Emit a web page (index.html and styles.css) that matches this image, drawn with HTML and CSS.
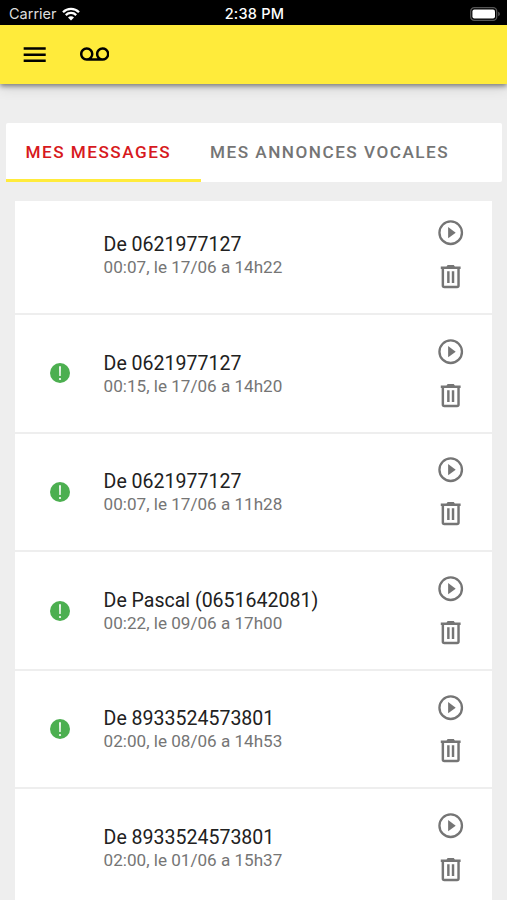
FILE: index.html
```
<!DOCTYPE html>
<html lang="fr">
<head>
  <meta charset="UTF-8" />
  <meta name="viewport" content="width=device-width, initial-scale=1.0"/>
  <title>Messagerie vocale</title>
  <link rel="stylesheet" href="styles.css">
</head>
<body>
  <!-- Icons -->
  <svg class="sprite">
    <symbol id="play" viewBox="0 0 24 24">
      <circle cx="12" cy="12" r="9.2" fill="none" stroke="currentColor" stroke-width="1.9"/>
      <path d="M9.9 7.4v9.2l6.2-4.6z" fill="currentColor"/>
    </symbol>
    <symbol id="trash" viewBox="0 0 24 24">
      <path d="M5.6 5v14.2a1.2 1.2 0 0 0 1.2 1.2h10.4a1.2 1.2 0 0 0 1.2-1.2V5M10.1 7.6v9.6M13.9 7.6v9.6" fill="none" stroke="currentColor" stroke-width="2"/>
      <path d="M3.9 3.7h4.7l.9-1.2h5l.9 1.2h4.7v2H3.9z" fill="currentColor"/>
    </symbol>
    <symbol id="alert" viewBox="0 0 20 20">
      <circle cx="10" cy="10" r="10" fill="#4caf50"/>
      <path d="M9.1 3.2h1.8l-.2 9.8H9.3z" fill="#fff"/>
      <circle cx="10" cy="16" r="1.1" fill="#fff"/>
    </symbol>
  </svg>

  <div class="status-bar">
    <div class="carrier">
      <span>Carrier</span>
      <svg class="wifi" viewBox="0 0 18 14">
        <path d="M1 5.2a11.3 11.3 0 0 1 16 0M3.8 8.1a7.4 7.4 0 0 1 10.4 0" fill="none" stroke="#fff" stroke-width="2.3"/>
        <path d="M9 13.6l-3-3.1a4.2 4.2 0 0 1 6 0z" fill="#fff"/>
      </svg>
    </div>
    <div class="time">2:38 PM</div>
    <div class="battery">
      <svg viewBox="0 0 30 14">
        <rect x=".7" y=".7" width="26" height="12.6" rx="3.6" fill="none" stroke="#555" stroke-width="1.3"/>
        <rect x="2.4" y="2.4" width="22.6" height="9.2" rx="2" fill="#fff"/>
        <path d="M28.3 4.8c1.9.7 1.9 3.7 0 4.4z" fill="#666"/>
      </svg>
    </div>
  </div>

  <header class="toolbar">
    <svg class="icon" viewBox="0 0 24 24"><path d="M3 18h18v-2H3v2zm0-5h18v-2H3v2zm0-7v2h18V6H3z"/></svg>
    <svg class="icon" viewBox="0 0 24 24"><path d="M18.5 6C15.46 6 13 8.46 13 11.5c0 1.33.47 2.55 1.26 3.5H9.74A5.45 5.45 0 0 0 11 11.5C11 8.46 8.54 6 5.5 6S0 8.46 0 11.5 2.46 17 5.5 17h13c3.04 0 5.5-2.46 5.5-5.5S21.54 6 18.5 6zm-13 9C3.57 15 2 13.43 2 11.5S3.57 8 5.5 8 9 9.57 9 11.5 7.43 15 5.5 15zm13 0c-1.93 0-3.5-1.57-3.5-3.5S16.57 8 18.5 8 22 9.57 22 11.5 20.43 15 18.5 15z"/></svg>
  </header>

  <main>
    <nav class="tabs">
      <a class="tab active">MES MESSAGES</a>
      <a class="tab">MES ANNONCES VOCALES</a>
    </nav>

    <ul class="messages">
      <li class="message">
        <div class="badge"></div>
        <div class="text"><h3>De 0621977127</h3><p>00:07, le 17/06 a 14h22</p></div>
        <div class="actions"><svg><use href="#play"/></svg><svg><use href="#trash"/></svg></div>
      </li>
      <li class="message">
        <div class="badge"><svg><use href="#alert"/></svg></div>
        <div class="text"><h3>De 0621977127</h3><p>00:15, le 17/06 a 14h20</p></div>
        <div class="actions"><svg><use href="#play"/></svg><svg><use href="#trash"/></svg></div>
      </li>
      <li class="message">
        <div class="badge"><svg><use href="#alert"/></svg></div>
        <div class="text"><h3>De 0621977127</h3><p>00:07, le 17/06 a 11h28</p></div>
        <div class="actions"><svg><use href="#play"/></svg><svg><use href="#trash"/></svg></div>
      </li>
      <li class="message">
        <div class="badge"><svg><use href="#alert"/></svg></div>
        <div class="text"><h3>De Pascal (0651642081)</h3><p>00:22, le 09/06 a 17h00</p></div>
        <div class="actions"><svg><use href="#play"/></svg><svg><use href="#trash"/></svg></div>
      </li>
      <li class="message">
        <div class="badge"><svg><use href="#alert"/></svg></div>
        <div class="text"><h3>De 8933524573801</h3><p>02:00, le 08/06 a 14h53</p></div>
        <div class="actions"><svg><use href="#play"/></svg><svg><use href="#trash"/></svg></div>
      </li>
      <li class="message">
        <div class="badge"></div>
        <div class="text"><h3>De 8933524573801</h3><p>02:00, le 01/06 a 15h37</p></div>
        <div class="actions"><svg><use href="#play"/></svg><svg><use href="#trash"/></svg></div>
      </li>
    </ul>
  </main>
</body>
</html>
```

FILE: styles.css
```
* {
  margin: 0;
  padding: 0;
  box-sizing: border-box;
}

body {
  height: 900px;
  overflow: hidden;
  background: #eee;
  font-family: Roboto, sans-serif;
}

.sprite {
  display: none;
}

.status-bar {
  display: grid;
  grid-template-columns: 1fr auto 1fr;
  align-items: center;
  height: 25px;
  padding: 2px 7px 0 9px;
  background: #000;
  color: #fff;
  font-family: Inter, sans-serif;
  font-size: 14.5px;
}

.carrier {
  display: flex;
  align-items: center;
  gap: 5px;
  color: #ddd;
}

.wifi {
  width: 18px;
  height: 14px;
}

.time {
  font-weight: 500;
  letter-spacing: 0.25px;
}

.battery {
  display: flex;
  justify-content: flex-end;
}

.battery svg {
  width: 30px;
  height: 14px;
}

.toolbar {
  display: flex;
  align-items: center;
  gap: 29.8px;
  height: 59px;
  padding-left: 20.4px;
  background: #ffeb3b;
  box-shadow: 0 2px 5px rgba(0, 0, 0, 0.45), 0 5px 12px rgba(0, 0, 0, 0.1);
}

.icon {
  width: 29.4px;
  height: 29.4px;
}

main {
  padding: 39.4px 5px 0 6px;
}

.tabs {
  display: flex;
  height: 58.5px;
  background: #fff;
  border-radius: 2px;
}

.tab {
  padding: 0 29px 0 19.5px;
  border-bottom: 3px solid transparent;
  color: #757575;
  font-size: 17.15px;
  font-weight: 500;
  letter-spacing: 1.5px;
  line-height: 58.5px;
  white-space: nowrap;
}

.tab.active {
  width: 195px;
  padding-right: 0;
  border-color: #ffeb3b;
  color: #d71920;
}

.tab + .tab {
  padding-left: 9px;
}

.messages {
  margin: 19.4px 9.8px 0 9.4px;
  background: #fff;
  list-style: none;
}

.message {
  display: flex;
  height: 118.55px;
  border-bottom: 2px solid #eee;
}

.message:first-child {
  height: 113.8px;
}

.message:first-child .text {
  padding-top: 30.7px;
}

.message:first-child .actions {
  padding-top: 17px;
}

.badge {
  width: 88.2px;
  padding: 48.4px 0 0 34.3px;
}

.badge svg {
  display: block;
  width: 20px;
  height: 20px;
}

.text {
  flex: 1;
  padding-top: 35.5px;
}

.text h3 {
  color: #212121;
  font-size: 19.55px;
  font-weight: 400;
  line-height: 25px;
}

.text p {
  color: #757575;
  font-size: 17.1px;
  line-height: 21px;
}

.actions {
  display: flex;
  flex-direction: column;
  gap: 14.4px;
  width: 56px;
  padding-top: 21.8px;
  color: #757575;
}

.actions svg {
  width: 29.4px;
  height: 29.4px;
}
```
